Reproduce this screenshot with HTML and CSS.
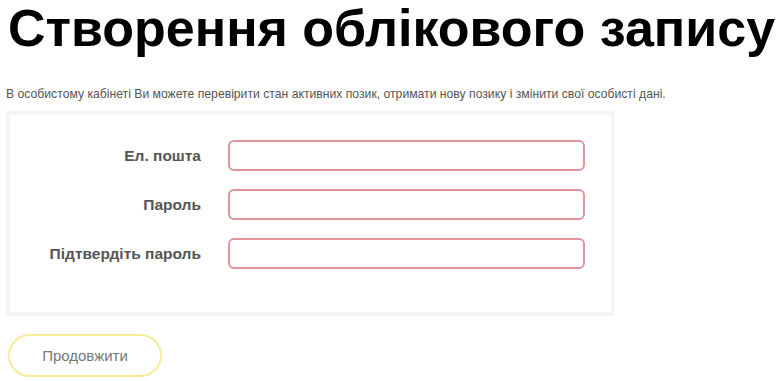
FILE: index.html
```html
<!DOCTYPE html>
<html lang="uk">
<head>
    <meta charset="UTF-8">
    <meta name="viewport" content="width=device-width, initial-scale=1.0">
    <title>Створення облікового запису</title>
    <link rel="stylesheet" href="styles.css">
</head>
<body>
    <h1>Створення облікового запису</h1>
    <p class="intro">В особистому кабінеті Ви можете перевірити стан активних позик, отримати нову позику і змінити свої особисті дані.</p>

    <form class="signup">
        <div class="row">
            <label for="email">Ел. пошта</label>
            <input type="text" id="email">
        </div>
        <div class="row">
            <label for="pass">Пароль</label>
            <input type="password" id="pass">
        </div>
        <div class="row">
            <label for="pass2">Підтвердіть пароль</label>
            <input type="password" id="pass2">
        </div>
    </form>

    <button class="next">Продовжити</button>
</body>
</html>
```

FILE: styles.css
```css
body {
    margin: 0;
    padding: 0 8px;
    font-family: "Liberation Sans", Arial, sans-serif;
    background: #ffffff;
}
h1 {
    margin: 0;
    font-size: 52px;
    line-height: 56px;
    font-weight: bold;
    color: #000;
    white-space: nowrap;
}
.intro {
    margin: 31px 0 0 -2px;
    font-size: 12.2px;
    line-height: 14px;
    color: #555;
}
.signup {
    margin: 10px 0 0 -2px;
    width: 601px;
    height: 172px;
    border: 4px solid #f5f5f5;
    border-right-width: 3px;
    padding-top: 25px;
    box-sizing: content-box;
}
.row {
    display: flex;
    align-items: center;
    height: 31px;
    margin-bottom: 18px;
}
label {
    width: 191px;
    text-align: right;
    font-size: 15.5px;
    font-weight: bold;
    color: #555;
}
input[type="text"],
input[type="password"] {
    margin-left: 27px;
    width: 357px;
    height: 31px;
    box-sizing: border-box;
    border: 2px solid #e0959a;
    border-radius: 6px;
    background: #fff;
    padding: 4px 8px;
}
.next {
    margin-top: 18px;
    width: 154px;
    height: 43px;
    background: #fff;
    border: 2px solid #f7ec9a;
    border-radius: 22px;
    font-family: "Liberation Sans", Arial, sans-serif;
    font-size: 15px;
    color: #777;
    cursor: pointer;
}
```
